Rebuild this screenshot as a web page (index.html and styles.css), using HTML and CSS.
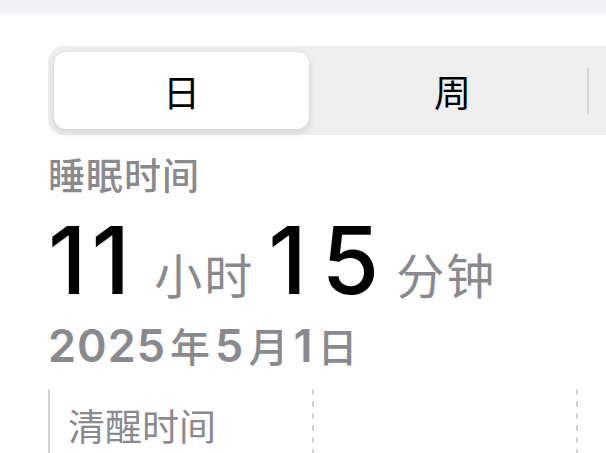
FILE: index.html
```html
<!DOCTYPE html>
<html lang="zh-CN">
<head>
<meta charset="utf-8">
<link rel="stylesheet" href="styles.css">
</head>
<body>
<div class="topbar"></div>
<main class="content">
  <div class="segmented">
    <div class="seg selected">日</div>
    <div class="sep hidden"><span class="sep-line"></span></div>
    <div class="seg">周</div>
    <div class="sep"><span class="sep-line"></span></div>
    <div class="seg"></div>
  </div>

  <div class="label">睡眠时间</div>
  <div class="duration">
    <span class="num hours">11</span><span class="unit">小时</span><span class="num minutes">15</span><span class="unit">分钟</span>
  </div>
  <div class="date">2025<span class="cjk">年</span>5<span class="cjk">月</span>1<span class="cjk">日</span></div>

  <div class="stats">
    <div class="col first">
      <div class="col-title">清醒时间</div>
    </div>
    <div class="dash"></div>
    <div class="col"></div>
    <div class="dash"></div>
    <div class="col"></div>
  </div>
</main>
</body>
</html>
```

FILE: styles.css
```css
html, body {
  margin: 0;
  padding: 0;
  overflow: hidden;
  background: #ffffff;
  font-family: "Inter", "Noto Sans CJK SC", sans-serif;
}

.topbar {
  height: 14px;
  background: #f2f2f7;
}

.content {
  padding: 32px 0 0 48px;
}

.segmented {
  display: flex;
  align-items: center;
  width: 900px;
  padding: 6px;
  background: #eeeeef;
  border-radius: 16px;
}

.seg {
  flex: 0 0 255px;
  height: 77px;
  display: flex;
  align-items: center;
  justify-content: center;
  font-family: "Noto Sans CJK SC", sans-serif;
  font-size: 37px;
  color: #000;
  border-radius: 12px;
}

.seg.selected {
  background: #ffffff;
  box-shadow: 0 3px 9px rgba(0, 0, 0, 0.12), 0 0 1px rgba(0, 0, 0, 0.06);
}

.sep {
  flex: 0 0 16px;
  display: flex;
  justify-content: center;
}

.sep-line {
  width: 2px;
  height: 46px;
  border-radius: 1px;
  background: #d4d4d8;
}

.sep.hidden .sep-line {
  visibility: hidden;
}

.label {
  margin-top: 18px;
  font-family: "Noto Sans CJK SC", sans-serif;
  font-size: 37px;
  font-weight: 500;
  letter-spacing: 1px;
  line-height: 43px;
  color: #8a8a8e;
}

.duration {
  display: flex;
  align-items: baseline;
  margin-top: 18px;
  line-height: 1;
}

.num {
  font-family: "Inter", sans-serif;
  font-size: 93px;
  font-weight: 500;
  color: #000;
}

.num.hours {
  letter-spacing: 5px;
}

.num.minutes {
  letter-spacing: 15px;
}

.unit {
  font-family: "Noto Sans CJK SC", sans-serif;
  font-size: 48px;
  letter-spacing: 2px;
  color: #8a8a8e;
}

.hours + .unit {
  margin: 0 14px 0 19px;
}

.minutes + .unit {
  margin-left: 2px;
}

.date {
  margin-top: 14px;
  font-family: "Inter", "Noto Sans CJK SC", sans-serif;
  font-size: 45px;
  font-weight: 600;
  letter-spacing: 1px;
  line-height: 48px;
  color: #8a8a8e;
}

.date .cjk {
  font-family: "Noto Sans CJK SC", sans-serif;
  font-size: 40px;
  font-weight: 500;
  margin: 0 4px;
}

.stats {
  display: flex;
  margin-top: 19px;
  height: 80px;
}

.col {
  flex: 0 0 262px;
}

.col.first {
  border-left: 2px solid #d4d4d8;
  padding-left: 18px;
  flex-basis: 244px;
}

.col-title {
  padding-top: 14px;
  font-family: "Noto Sans CJK SC", sans-serif;
  font-size: 37px;
  line-height: 44px;
  color: #8a8a8e;
}

.dash {
  flex: 0 0 2px;
  background: repeating-linear-gradient(to bottom, #d4d4d8 0 6px, transparent 6px 12px);
}
```
